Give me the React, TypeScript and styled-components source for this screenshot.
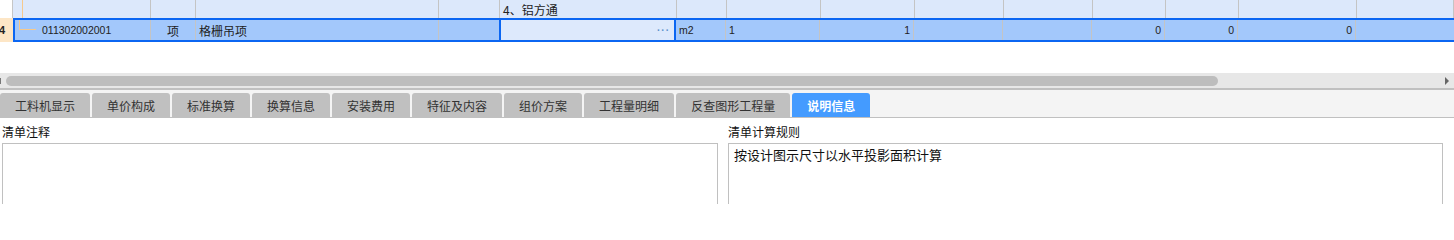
import styled, { createGlobalStyle } from "styled-components";

const GlobalStyle = createGlobalStyle`
  html, body {
    margin: 0;
    padding: 0;
    background: #fff;
    overflow: hidden;
  }
  body {
    font-family: "Noto Sans CJK SC", "Liberation Sans", sans-serif;
    color: #222;
  }
`;

// column widths, left to right, starting with the row number column
const COLS = [13, 138, 45, 243, 61, 177, 50, 94, 94, 89, 89, 73, 73, 118, 97];

const Page = styled.div`
  width: 1454px;
  height: 204px;
  display: flex;
  flex-direction: column;
  overflow: hidden;
`;

const Row = styled.div<{ $h: number; $bg: string }>`
  display: flex;
  height: ${(p) => p.$h}px;
  background: ${(p) => p.$bg};
  box-sizing: border-box;
`;

const RowNum = styled.div<{ $active?: boolean }>`
  width: 13px;
  flex: none;
  box-sizing: border-box;
  background: ${(p) => (p.$active ? "#fde6c6" : "#fff")};
  border-right: ${(p) => (p.$active ? "none" : "1px solid #c6c6c6")};
  font: bold 11px "Liberation Sans", sans-serif;
  color: #222;
  display: flex;
  align-items: center;
  overflow: hidden;
  text-indent: -1px;
`;

const Selected = styled.div`
  flex: 1;
  display: flex;
  border-top: 2px solid #0b66f2;
  border-bottom: 2px solid #0b66f2;
  border-left: 2px solid #0b66f2;
  background: #a3c8fb;
`;

const Cell = styled.div<{ $w: number; $align?: "left" | "center" | "right" }>`
  width: ${(p) => p.$w}px;
  flex: none;
  box-sizing: border-box;
  border-right: 1px solid #c4c4c4;
  display: flex;
  align-items: center;
  justify-content: ${(p) =>
    p.$align === "right" ? "flex-end" : p.$align === "center" ? "center" : "flex-start"};
  padding: 0 3px;
  font-size: 12px;
  white-space: nowrap;
  overflow: hidden;
`;

const Num = styled.span`
  font: 10.5px "Liberation Sans", sans-serif;
  color: #222;
`;

const EditCell = styled(Cell)`
  background: #dde9fc;
  border-left: 2px solid #0b66f2;
  border-right: 2px solid #0b66f2;
  padding-right: 4px;
`;

const Dots = styled.span`
  font: bold 10px "Liberation Sans", sans-serif;
  color: #5d92cc;
  letter-spacing: 1px;
`;

const TreeLine = styled.span<{ $full?: boolean }>`
  flex: none;
  align-self: flex-start;
  box-sizing: border-box;
  margin-left: ${(p) => (p.$full ? 6 : 4)}px;
  height: ${(p) => (p.$full ? 18 : 10)}px;
  width: ${(p) => (p.$full ? 1 : 17)}px;
  border-left: 1px solid #f6c98d;
  border-bottom: ${(p) => (p.$full ? "none" : "1px solid #f6c98d")};
  margin-right: 6px;
`;

const Blank = styled.div`
  height: 31px;
  flex: none;
`;

const ScrollTrack = styled.div`
  height: 15px;
  flex: none;
  background: #e7e7e7;
  display: flex;
  align-items: center;
  padding-left: 6px;
  position: relative;
`;

const Thumb = styled.div`
  width: 1212px;
  height: 10px;
  border-radius: 5px;
  background: #bdbdbd;
`;

const ArrowRight = styled.span`
  position: absolute;
  right: 5px;
  top: 4px;
  border-left: 4px solid #666;
  border-top: 4px solid transparent;
  border-bottom: 4px solid transparent;
`;

const ArrowLeftEdge = styled.span`
  position: absolute;
  left: 0;
  top: 5px;
  width: 1px;
  height: 6px;
  background: #777;
`;

const TabBar = styled.div`
  height: 30px;
  flex: none;
  box-sizing: border-box;
  background: #f4f4f4;
  border-top: 2px solid #c0c0c0;
  border-bottom: 1px solid #c0c0c0;
  display: flex;
  align-items: flex-end;
  gap: 2px;
`;

const Tab = styled.div<{ $active?: boolean }>`
  height: 24px;
  padding: 0 15px;
  display: flex;
  align-items: center;
  border-radius: 3px 3px 0 0;
  font-size: 12px;
  background: ${(p) => (p.$active ? "#449bff" : "#c0c0c0")};
  color: ${(p) => (p.$active ? "#fff" : "#333")};
  font-weight: ${(p) => (p.$active ? "bold" : "normal")};
  white-space: nowrap;
`;

const Panels = styled.div`
  flex: 1;
  display: flex;
  gap: 10px;
  padding: 0 11px 0 2px;
`;

const Panel = styled.div<{ $w: number }>`
  width: ${(p) => p.$w}px;
  display: flex;
  flex-direction: column;
`;

const Label = styled.div`
  height: 25px;
  box-sizing: border-box;
  padding-top: 6px;
  font-size: 12px;
  line-height: 16px;
  color: #111;
`;

const TextBox = styled.div`
  flex: 1;
  border: 1px solid #c0c0c0;
  border-bottom: none;
  padding: 3px 5px;
  font-size: 13px;
  line-height: 16px;
  color: #111;
`;

const TABS = [
  "工料机显示",
  "单价构成",
  "标准换算",
  "换算信息",
  "安装费用",
  "特征及内容",
  "组价方案",
  "工程量明细",
  "反查图形工程量",
  "说明信息",
];

export default function App() {
  return (
    <>
      <GlobalStyle />
      <Page>
        <Row $h={18} $bg="#dce8fb">
          <RowNum />
          <Cell $w={COLS[1]}>
            <TreeLine $full />
          </Cell>
          {COLS.slice(2, 4).map((w, i) => (
            <Cell key={i} $w={w} />
          ))}
          <Cell $w={COLS[4]} />
          <Cell $w={COLS[5]}>4、铝方通</Cell>
          {COLS.slice(6).map((w, i) => (
            <Cell key={i} $w={w} />
          ))}
        </Row>
        <Row $h={24} $bg="#fff">
          <RowNum $active>4</RowNum>
          <Selected>
            <Cell $w={COLS[1] - 2} style={{ padding: 0 }}>
              <TreeLine />
              <Num>011302002001</Num>
            </Cell>
            <Cell $w={COLS[2]} $align="center">项</Cell>
            <Cell $w={COLS[3]}>格栅吊项</Cell>
            <Cell $w={COLS[4] - 1} style={{ borderRight: "none" }} />
            <EditCell $w={COLS[5]} $align="right">
              <Dots>···</Dots>
            </EditCell>
            <Cell $w={COLS[6]}>
              <Num>m2</Num>
            </Cell>
            <Cell $w={COLS[7]}>
              <Num>1</Num>
            </Cell>
            <Cell $w={COLS[8]} $align="right">
              <Num>1</Num>
            </Cell>
            <Cell $w={COLS[9]} />
            <Cell $w={COLS[10]} />
            <Cell $w={COLS[11]} $align="right">
              <Num>0</Num>
            </Cell>
            <Cell $w={COLS[12]} $align="right">
              <Num>0</Num>
            </Cell>
            <Cell $w={COLS[13]} $align="right">
              <Num>0</Num>
            </Cell>
            <Cell $w={COLS[14]} style={{ borderRight: "none" }} />
          </Selected>
        </Row>
        <Blank />
        <ScrollTrack>
          <ArrowLeftEdge />
          <Thumb />
          <ArrowRight />
        </ScrollTrack>
        <TabBar>
          {TABS.map((t, i) => (
            <Tab key={t} $active={i === TABS.length - 1}>
              {t}
            </Tab>
          ))}
        </TabBar>
        <Panels>
          <Panel $w={716}>
            <Label>清单注释</Label>
            <TextBox />
          </Panel>
          <Panel $w={715}>
            <Label>清单计算规则</Label>
            <TextBox>按设计图示尺寸以水平投影面积计算</TextBox>
          </Panel>
        </Panels>
      </Page>
    </>
  );
}
